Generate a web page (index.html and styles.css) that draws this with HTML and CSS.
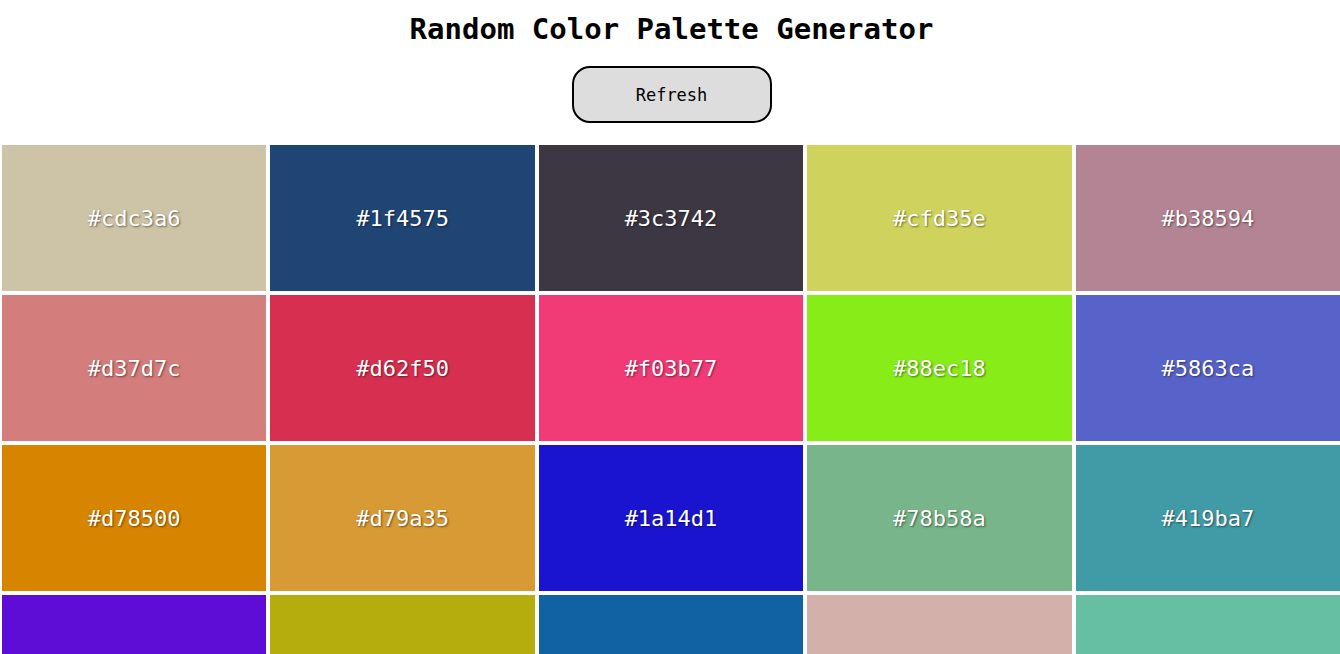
FILE: index.html
```html
<!DOCTYPE html>
<html lang="en">
<head>
<meta charset="utf-8">
<title>Random Color Palette Generator</title>
<link rel="stylesheet" href="styles.css">
</head>
<body>
  <header class="top">
    <h1 class="title">Random Color Palette Generator</h1>
    <button class="refresh" type="button">Refresh</button>
  </header>
  <main class="palette">
    <div class="swatch" style="background:#cdc3a6"><span class="hex">#cdc3a6</span></div>
    <div class="swatch" style="background:#1f4575"><span class="hex">#1f4575</span></div>
    <div class="swatch" style="background:#3c3742"><span class="hex">#3c3742</span></div>
    <div class="swatch" style="background:#cfd35e"><span class="hex">#cfd35e</span></div>
    <div class="swatch" style="background:#b38594"><span class="hex">#b38594</span></div>
    <div class="swatch" style="background:#d37d7c"><span class="hex">#d37d7c</span></div>
    <div class="swatch" style="background:#d62f50"><span class="hex">#d62f50</span></div>
    <div class="swatch" style="background:#f03b77"><span class="hex">#f03b77</span></div>
    <div class="swatch" style="background:#88ec18"><span class="hex">#88ec18</span></div>
    <div class="swatch" style="background:#5863ca"><span class="hex">#5863ca</span></div>
    <div class="swatch" style="background:#d78500"><span class="hex">#d78500</span></div>
    <div class="swatch" style="background:#d79a35"><span class="hex">#d79a35</span></div>
    <div class="swatch" style="background:#1a14d1"><span class="hex">#1a14d1</span></div>
    <div class="swatch" style="background:#78b58a"><span class="hex">#78b58a</span></div>
    <div class="swatch" style="background:#419ba7"><span class="hex">#419ba7</span></div>
    <div class="swatch" style="background:#5d0dd6"><span class="hex">#5d0dd6</span></div>
    <div class="swatch" style="background:#b5ad0d"><span class="hex">#b5ad0d</span></div>
    <div class="swatch" style="background:#1062a3"><span class="hex">#1062a3</span></div>
    <div class="swatch" style="background:#d4b0aa"><span class="hex">#d4b0aa</span></div>
    <div class="swatch" style="background:#66bea3"><span class="hex">#66bea3</span></div>
  </main>
</body>
</html>
```
FILE: styles.css
```css
html, body {
  margin: 0;
  padding: 0;
  background: #ffffff;
}

body {
  font-family: "DejaVu Sans Mono", "Liberation Mono", monospace;
  color: #000;
}

.top {
  display: flex;
  flex-direction: column;
  align-items: center;
  padding-left: 3px;
}

.title {
  margin: 12px 0 0;
  font-size: 29px;
  line-height: 34px;
  font-weight: bold;
}

.refresh {
  margin-top: 20px;
  width: 200px;
  height: 57px;
  border: 2px solid #000;
  border-radius: 18px;
  background: #dddddd;
  font-family: "DejaVu Sans Mono", "Liberation Mono", monospace;
  font-size: 17px;
  color: #000;
  padding: 0;
}

.palette {
  margin-top: 22px;
  padding-left: 2px;
  display: grid;
  grid-template-columns: repeat(5, 1fr);
  grid-auto-rows: 146px;
  gap: 4px;
}

.swatch {
  display: flex;
  align-items: center;
  justify-content: center;
}

.hex {
  color: #ffffff;
  font-size: 22px;
  text-shadow: 1px 1px 2px rgba(0, 0, 0, 0.5);
}
```
